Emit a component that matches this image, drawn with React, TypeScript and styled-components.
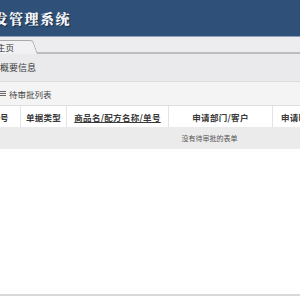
import React from "react";
import styled, { createGlobalStyle } from "styled-components";

const Global = createGlobalStyle`
  html, body { margin: 0; padding: 0; background: #ffffff; overflow: hidden; }
  body { font-family: "Noto Sans CJK SC", "Liberation Sans", sans-serif; width: 300px; height: 300px; }
  #root { width: 300px; height: 300px; overflow: hidden; }
`;

const Page = styled.div`
  width: 300px;
  height: 300px;
  display: flex;
  flex-direction: column;
  overflow: hidden;
  background: #ffffff;
`;

const Header = styled.header`
  height: 36px;
  flex: none;
  background: #2f5179;
  border-bottom: 1px solid #8fa2b8;
  display: flex;
  align-items: center;
  overflow: hidden;
`;

const Title = styled.h1`
  margin: 0 0 1px -22px;
  font-family: "Noto Serif CJK SC", "Noto Sans CJK SC", serif;
  font-size: 14px;
  font-weight: 900;
  letter-spacing: 1.5px;
  color: #f4f6fa;
  white-space: nowrap;
  text-shadow: 1px 1px 1px rgba(0, 0, 0, 0.45);
`;

const TabBar = styled.nav`
  height: 15px;
  flex: none;
  background: #ededf0;
  border-bottom: 2px solid #bcbcbc;
  display: flex;
  align-items: flex-end;
`;

const Tab = styled.div`
  position: relative;
  margin-left: -18px;
  margin-bottom: -2px;
  width: 56px;
  height: 14px;
  display: flex;
  align-items: center;
  padding-left: 15px;
  box-sizing: border-box;
  font-size: 8.5px;
  color: #333;
  z-index: 1;

  &::before {
    content: "";
    position: absolute;
    inset: 0 0 0 0;
    background: #f1f1f3;
    border: 1px solid #a9a9a9;
    border-bottom: none;
    border-radius: 0 3px 0 0;
    transform: skewX(20deg);
    transform-origin: bottom left;
    z-index: -1;
  }
`;

const Content = styled.main`
  flex: none;
  display: flex;
  flex-direction: column;
  background: #eaeaed;
`;

const Summary = styled.div`
  height: 28px;
  display: flex;
  align-items: center;
  padding-left: 0;
  font-size: 9px;
  color: #3a3a3a;
  border-bottom: 1px solid #dcdcdc;
  box-sizing: border-box;
`;

const PanelHead = styled.div`
  height: 24px;
  display: flex;
  align-items: center;
  gap: 3px;
  background: #f4f4f5;
  font-size: 8.5px;
  color: #444;
  border-bottom: 1px solid #dedede;
  box-sizing: border-box;
`;

const MenuIcon = styled.span`
  display: inline-flex;
  flex-direction: column;
  justify-content: space-between;
  width: 6px;
  height: 5px;
  margin-left: 0;
  & > i {
    display: block;
    height: 1px;
    background: #666;
  }
`;

const Grid = styled.div`
  display: grid;
  grid-template-columns: 41px 46px 102px 104px 52px 114px;
  width: 459px;
  margin-left: -20px;
  background: #ffffff;
`;

const HeadCell = styled.div<{ $last?: boolean }>`
  height: 21px;
  display: flex;
  align-items: center;
  justify-content: center;
  font-size: 8.5px;
  font-weight: 700;
  letter-spacing: 0.3px;
  color: #3a3a3a;
  white-space: nowrap;
  border-right: ${(p) => (p.$last ? "none" : "1px solid #e4e4e4")};
  box-sizing: border-box;
`;

const SortLink = styled.span`
  text-decoration: underline;
`;

const EmptyRow = styled.div`
  grid-column: 1 / -1;
  height: 22px;
  display: flex;
  align-items: center;
  justify-content: center;
  background: #ebebeb;
  font-size: 7px;
  color: #555;
`;

const Blank = styled.div`
  height: 145px;
  flex: none;
  background: #ffffff;
  border-bottom: 2px solid #d9d9d9;
`;

export default function App() {
  return (
    <Page>
      <Global />
      <Header>
        <Title>研发管理系统</Title>
      </Header>
      <TabBar>
        <Tab>主页</Tab>
      </TabBar>
      <Content>
        <Summary>概要信息</Summary>
        <PanelHead>
          <MenuIcon>
            <i />
            <i />
            <i />
          </MenuIcon>
          <span>待审批列表</span>
        </PanelHead>
        <Grid>
          <HeadCell>序号</HeadCell>
          <HeadCell>单据类型</HeadCell>
          <HeadCell>
            <SortLink>商品名/配方名称/单号</SortLink>
          </HeadCell>
          <HeadCell>申请部门/客户</HeadCell>
          <HeadCell>申请时间</HeadCell>
          <HeadCell $last>操作</HeadCell>
          <EmptyRow>没有待审批的表单</EmptyRow>
        </Grid>
      </Content>
      <Blank />
    </Page>
  );
}
